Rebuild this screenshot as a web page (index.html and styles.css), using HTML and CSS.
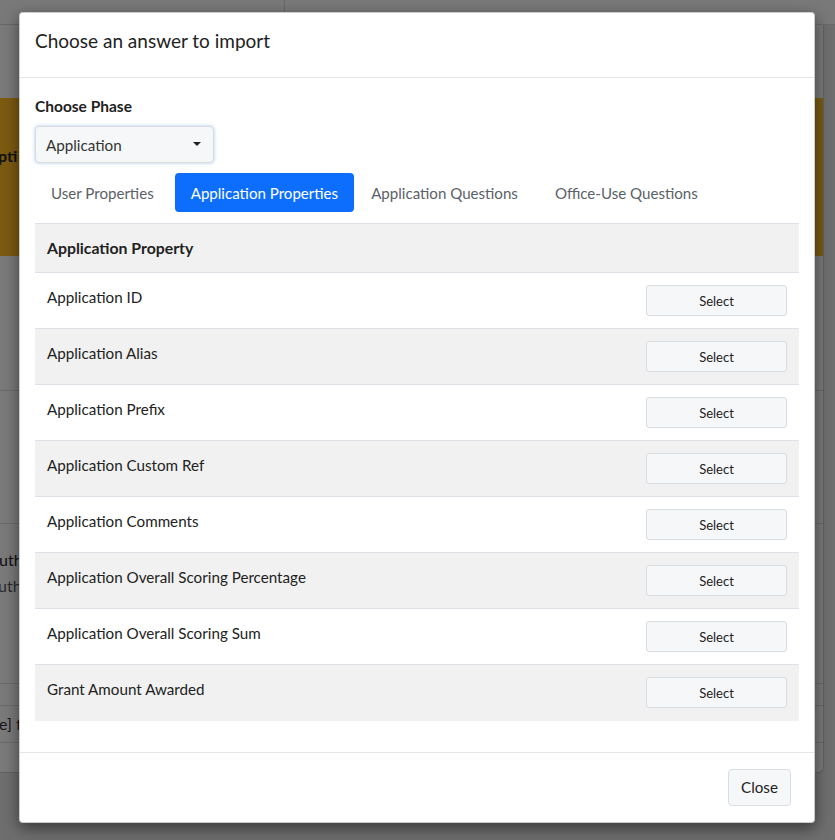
FILE: index.html
```html
<!DOCTYPE html>
<html>
<head>
<meta charset="utf-8">
<link rel="stylesheet" href="styles.css">
</head>
<body>
<div class="page">
  <div class="topbar"><div class="topbar-left"></div><div class="topbar-right"></div></div>
  <div class="card">
    <div class="banner"><span class="banner-text">pti</span></div>
    <div class="card-row r1"></div>
    <div class="card-row r2"></div>
    <div class="card-row r3"><div class="auth1">uth</div><div class="auth2">uth</div></div>
    <div class="card-row r4"></div>
    <div class="card-row r5"><span class="bracket">e] f</span></div>
    <div class="card-row r6"></div>
  </div>
</div>
<div class="backdrop"></div>
<div class="modal">
  <div class="modal-header"><h5 class="modal-title">Choose an answer to import</h5></div>
  <div class="modal-body">
    <div class="label">Choose Phase</div>
    <div class="select"><span>Application</span><span class="caret"></span></div>
    <ul class="tabs">
      <li class="tab">User Properties</li>
      <li class="tab active">Application Properties</li>
      <li class="tab tight">Application Questions</li>
      <li class="tab">Office-Use Questions</li>
    </ul>
    <table class="table">
      <thead><tr><th colspan="2">Application Property</th></tr></thead>
      <tbody>
        <tr><td>Application ID</td><td class="act"><button class="btn-sel">Select</button></td></tr>
        <tr><td>Application Alias</td><td class="act"><button class="btn-sel">Select</button></td></tr>
        <tr><td>Application Prefix</td><td class="act"><button class="btn-sel">Select</button></td></tr>
        <tr><td>Application Custom Ref</td><td class="act"><button class="btn-sel">Select</button></td></tr>
        <tr><td>Application Comments</td><td class="act"><button class="btn-sel">Select</button></td></tr>
        <tr><td>Application Overall Scoring Percentage</td><td class="act"><button class="btn-sel">Select</button></td></tr>
        <tr><td>Application Overall Scoring Sum</td><td class="act"><button class="btn-sel">Select</button></td></tr>
        <tr><td>Grant Amount Awarded</td><td class="act"><button class="btn-sel">Select</button></td></tr>
      </tbody>
    </table>
  </div>
  <div class="modal-footer"><button class="btn-close">Close</button></div>
</div>
</body>
</html>
```

FILE: styles.css
```css
* { box-sizing: border-box; }
html, body { margin: 0; padding: 0; }
body {
  width: 835px;
  height: 840px;
  overflow: hidden;
  font-family: "Lato", "Liberation Sans", sans-serif;
  color: #212529;
  background: #dcdcdc;
  position: relative;
}
.page { width: 835px; height: 840px; }
.topbar {
  height: 25px;
  display: flex;
  border-bottom: 1px solid #d0d0d0;
  background: #f2f2f2;
}
.topbar-left { width: 285px; border-right: 1px solid #d0d0d0; }
.topbar-right { flex: 1; }
.card {
  margin: 0 11px 0 0;
  height: 748px;
  background: #f5f5f5;
  border-right: 1px solid #c4c4c4;
  border-bottom: 1px solid #c4c4c4;
  border-radius: 0 0 6px 0;
  padding-top: 73px;
}
.banner {
  height: 158px;
  background: #f9b520;
  padding-top: 47px;
}
.banner-text { font-weight: 700; font-size: 16px; margin-left: -2px; color: #222; line-height: 22px; }
.card-row { border-bottom: 1px solid #d6d6d6; }
.r1 { height: 135px; }
.r2 { height: 133px; }
.r3 { height: 160px; padding-top: 23px; }
.auth1 { margin-left: -1px; font-size: 16px; line-height: 26px; color: #222; }
.auth2 { margin-left: -2px; font-size: 16px; line-height: 26px; color: #555; }
.r4 { height: 22px; }
.r5 { height: 37px; padding-top: 8px; }
.bracket { margin-left: -1px; font-size: 16px; color: #333; }
.r6 { height: 29px; border-bottom: none; }

.backdrop {
  position: absolute;
  inset: 0;
  background: rgba(0, 0, 0, 0.5);
}
.modal {
  position: absolute;
  left: 19px;
  top: 12px;
  width: 796px;
  background: #fff;
  border: 1px solid rgba(0,0,0,0.2);
  border-radius: 4px;
  box-shadow: 0 5px 15px rgba(0,0,0,0.5);
}
.modal-header {
  height: 65px;
  padding: 0 15px;
  display: flex;
  align-items: center;
  border-bottom: 1px solid #e5e5e5;
}
.modal-title {
  margin: 0;
  font-size: 19px;
  font-weight: 400;
  color: #222;
  padding-bottom: 9px;
}
.modal-body { padding: 16px 15px 16px 15px; }
.label {
  font-weight: 700;
  font-size: 15.5px;
  line-height: 24px;
  margin-bottom: 8px;
  color: #222;
}
.select {
  width: 179px;
  height: 37px;
  border: 1px solid #d6dbe0;
  border-radius: 4px;
  background: #f6f7f9;
  box-shadow: 0 0 3px 1px rgba(120,170,230,0.35);
  display: flex;
  align-items: center;
  justify-content: space-between;
  padding: 0 12px 0 10px;
  font-size: 15.2px;
  color: #333;
}
.caret {
  width: 0; height: 0;
  border-left: 4px solid transparent;
  border-right: 4px solid transparent;
  border-top: 4px solid #222;
  margin-bottom: 2px;
}
.tabs {
  list-style: none;
  margin: 10px 0 0 0;
  padding: 0;
  display: flex;
  gap: 5px;
}
.tab {
  height: 39px;
  padding: 0 16px;
  display: flex;
  align-items: center;
  border-radius: 4px;
  font-size: 15.1px;
  color: #5b6168;
}
.tab.tight { margin-left: -4px; }
.tab.active { background: #0d6efd; color: #fff; }
.table {
  width: 100%;
  border-collapse: collapse;
  margin: 11px 0 15px 0;
}
.table th, .table td {
  border-top: 1px solid #dde1e5;
  text-align: left;
  vertical-align: top;
  padding: 12px 12px;
  font-size: 15.2px;
  line-height: 24px;
  color: #222;
}
.table th { font-weight: 700; font-size: 15.8px; background: #f1f1f1; height: 49px; padding-top: 12px; }
.table td { height: 56px; }
.table tbody tr:nth-child(even) td { background: #f1f1f1; }
.table td.act { text-align: right; padding-top: 12px; }
.btn-sel {
  width: 141px;
  height: 31px;
  border: 1px solid #d9dce0;
  border-radius: 3px;
  background: #f6f7f9;
  font-family: inherit;
  font-size: 13px;
  color: #222;
  padding: 0;
}
.modal-footer {
  border-top: 1px solid #e5e5e5;
  padding: 16px 23px 16px 16px;
  display: flex;
  justify-content: flex-end;
}
.btn-close {
  width: 63px;
  height: 37px;
  border: 1px solid #d9dce0;
  border-radius: 4px;
  background: #f6f7f9;
  font-family: inherit;
  font-size: 15.2px;
  color: #222;
  padding: 0;
}
```
